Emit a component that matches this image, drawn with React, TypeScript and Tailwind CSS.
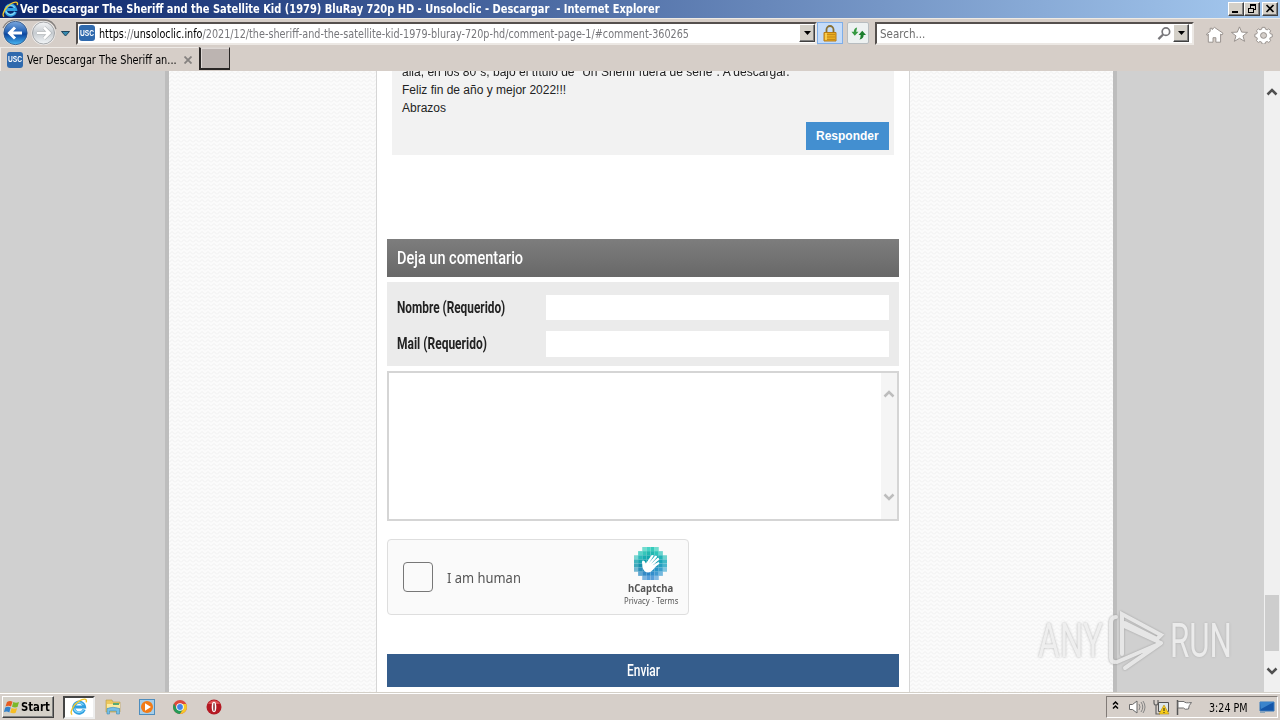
import { useLayoutEffect, useRef, useState } from "react";
import type { ReactNode } from "react";

const UI = "font-['DejaVu_Sans_Condensed','DejaVu_Sans',sans-serif]";
const RAISED = "border border-t-white border-l-white border-r-[#404040] border-b-[#404040] bg-[#d4d0c8] shadow-[inset_-1px_-1px_0_#808080]";
const SUNKEN = "border-2 border-t-[#55504e] border-l-[#55504e] border-r-[#ece8e4] border-b-[#ece8e4] bg-white";

// Squeezes or stretches a single line of text to a fixed width
function Fit({ width, className = "", children }: { width: number; className?: string; children: ReactNode }) {
    const ref = useRef<HTMLSpanElement>(null);
    const [scale, setScale] = useState(1);

    useLayoutEffect(() => {
        if (ref.current) setScale(width / ref.current.offsetWidth);
    }, [width]);

    return (
        <span className={`block shrink-0 ${className}`} style={{ width }}>
            <span ref={ref} className="inline-block origin-left whitespace-pre" style={{ transform: `scaleX(${scale})` }}>
                {children}
            </span>
        </span>
    );
}

function IeLogo({ className = "" }: { className?: string }) {
    return (
        <svg viewBox="0 0 18 18" className={className}>
            <path d="M14.2 11.5A5.4 5.4 0 1 1 14.5 9H5.5" fill="none" stroke="#2f9fe0" strokeWidth="3.2" />
            <path d="M13.8 11.8A5.4 5.4 0 0 1 4 10.5M4.6 6.8A5.4 5.4 0 0 1 13.5 7" fill="none" stroke="#86d8fa" strokeWidth="1.2" />
            <path d="M2.2 16.6C-.8 14.8 3.5 6.5 9 3.2C12.8 .8 17.5-.2 16.2 4.4" fill="none" stroke="#f0c52d" strokeWidth="1.4" />
        </svg>
    );
}

function UscIcon() {
    return (
        <span className="flex size-4 shrink-0 items-center justify-center rounded-[3px] bg-[#2f69ad] font-['Liberation_Sans',sans-serif] text-[9px] font-bold leading-none text-white">
            <Fit width={14}>USC</Fit>
        </span>
    );
}

function DropButton() {
    return (
        <span className={`flex h-[18px] w-4 shrink-0 items-center justify-center ${RAISED}`}>
            <svg viewBox="0 0 7 4" className="h-1 w-[7px]"><path d="M0 0h7L3.5 4z" fill="#000" /></svg>
        </span>
    );
}

function TitleBar() {
    return (
        <div className="flex h-[18px] items-center bg-[linear-gradient(90deg,#0a246a,#a6caf0)]">
            <IeLogo className="ml-[2px] size-[17px] shrink-0" />
            <Fit width={640} className={`ml-[1px] text-[12px] font-bold leading-[18px] text-white ${UI}`}>
                {"Ver Descargar The Sheriff and the Satellite Kid (1979) BluRay 720p HD - Unsoloclic - Descargar  - Internet Explorer"}
            </Fit>
            <div className="ml-auto mr-[2px] flex">
                <span className={`h-[14px] w-4 ${RAISED}`}>
                    <svg viewBox="0 0 14 12" className="h-3 w-[14px]"><path d="M3 8h6v2H3z" /></svg>
                </span>
                <span className={`h-[14px] w-4 ${RAISED}`}>
                    <svg viewBox="0 0 14 12" className="h-3 w-[14px]" fill="none" stroke="#000" shapeRendering="crispEdges">
                        <path d="M5.5 5V1.5h5v5H9M5 2h6M3.5 5.5h5v4h-5zM3 5h6" />
                    </svg>
                </span>
                <span className={`ml-[2px] h-[14px] w-4 ${RAISED}`}>
                    <svg viewBox="0 0 14 12" className="h-3 w-[14px]"><path d="M3.5 2l7 7M10.5 2l-7 7" stroke="#000" strokeWidth="1.7" /></svg>
                </span>
            </div>
        </div>
    );
}

function NavButtons() {
    return (
        <svg viewBox="0 0 76 30" className="h-[30px] w-[76px] shrink-0">
            <defs>
                <linearGradient id="back" x2="0" y2="1">
                    <stop stopColor="#7ba8de" /><stop offset=".45" stopColor="#2462b5" /><stop offset=".55" stopColor="#0b46a0" /><stop offset="1" stopColor="#49b8f4" />
                </linearGradient>
                <linearGradient id="fwd" x2="0" y2="1">
                    <stop stopColor="#f4f5f6" /><stop offset=".5" stopColor="#c6cbd0" /><stop offset="1" stopColor="#f3f6f8" />
                </linearGradient>
            </defs>
            <path d="M3 10Q7 2 16 2h28q9 0 12 9" fill="none" stroke="#85817f" strokeWidth="1.3" />
            <circle cx="15.5" cy="15" r="12.5" fill="#f3f2f1" />
            <circle cx="15.5" cy="15" r="11.7" fill="url(#back)" stroke="#31517c" strokeWidth=".8" />
            <path d="M22 15H10m5-5.5L9.5 15l5.5 5.5" fill="none" stroke="#fff" strokeWidth="3" />
            <circle cx="43.5" cy="15" r="12" fill="#f3f2f1" />
            <circle cx="43.5" cy="15" r="11" fill="url(#fwd)" stroke="#9b9da0" strokeWidth=".9" />
            <path d="M37 15h12m-5-5.5l5.5 5.5l-5.5 5.5" fill="none" stroke="#aeb2b5" strokeWidth="3.8" />
            <path d="M37 15h12m-5-5.5l5.5 5.5l-5.5 5.5" fill="none" stroke="#fff" strokeWidth="2.6" />
            <path d="M61.5 13.5h8l-4 4.5z" fill="#368ab0" stroke="#20465e" />
        </svg>
    );
}

function AddressRow() {
    return (
        <div className={`flex h-[29px] items-center border-t border-[#eeeae4] text-[12px] ${UI}`}>
            <NavButtons />
            <div className={`flex h-[23px] w-[741px] items-center ${SUNKEN}`}>
                <span className="ml-px"><UscIcon /></span>
                <Fit width={590} className="mt-[2px] ml-[4px] text-[#77777b]">
                    <span className="text-black">https</span>://<span className="text-black">unsoloclic.info</span>/2021/12/the-sheriff-and-the-satellite-kid-1979-bluray-720p-hd/comment-page-1/#comment-360265
                </Fit>
                <span className="ml-auto"><DropButton /></span>
            </div>
            <div className="flex h-[22px] w-[26px] items-center justify-center border border-[#7eaee9] bg-[#c5dcf9]">
                <svg viewBox="0 0 14 17" className="h-[17px] w-[14px]">
                    <path d="M3.5 8V4.5a3.5 3.5 0 0 1 7 0V8" fill="none" stroke="#887033" strokeWidth="1.8" />
                    <path d="M1 7.5h12V16H1z" fill="#e9ad22" stroke="#b77b16" />
                    <path d="M2 9.5h10M2 12h10M2 14.5h10" stroke="#c78b18" />
                    <path d="M3 8v7" stroke="#ffdb60" strokeWidth="1.5" />
                </svg>
            </div>
            <div className="ml-1 flex h-[22px] w-[22px] items-center justify-center rounded-[2px] border border-[#b8bdc0] bg-[#edf1f1]">
                <svg viewBox="0 0 18 16" className="h-[15px] w-[17px]">
                    <path d="M7.5 1.5L6.5 6H9L5 10.5L1.5 6H4Q4 2.5 7.5 1.500z" fill="#369941" />
                    <path d="M13 5l4 4.500H14.500q0 4-4.500 5q1.300-2 1.300-5H9z" fill="#1c7e2d" />
                </svg>
            </div>
            <div className={`ml-[6px] flex h-[23px] w-[319px] items-center ${SUNKEN}`}>
                <Fit width={45} className="mt-[2px] ml-[3px] text-[#6d6d6d]">Search...</Fit>
                <svg viewBox="0 0 16 16" className="ml-auto mr-[1px] size-[15px]" fill="none" stroke="#77767a">
                    <circle cx="9.5" cy="6" r="4" strokeWidth="1.8" />
                    <path d="M6.5 9L1.5 14" strokeWidth="2.4" />
                </svg>
                <span className="mr-[3px]"><DropButton /></span>
            </div>
            <svg viewBox="0 0 72 20" className="ml-[11px] mt-[4px] h-[18px] w-[68px]" preserveAspectRatio="none" fill="#fff" stroke="#928c88" strokeWidth="1">
                <path d="M3.5 9v9h5v-5h3v5h5V9l1.500 1l1-2L10 1.500L7.500 4V2.500h-2V6L1.500 9l1 1.500z" />
                <path d="M36.500 1l2.300 5.800l6.200.3l-4.800 3.900l1.700 6l-5.400-3.400l-5.400 3.400l1.700-6L28 7.100l6.200-.3z" />
                <path d="M60.500 1.500h3l.5 2l1.800.8l1.700-1.100l2.100 2.100l-1.100 1.800l.7 1.600l2 .5v3l-2 .5l-.7 1.700l1.100 1.800l-2.100 2.100l-1.700-1.100l-1.800.8l-.5 2h-3l-.5-2l-1.800-.8l-1.700 1.100l-2.100-2.100l1.100-1.800l-.7-1.700l-2-.5v-3l2-.5l.7-1.600l-1.100-1.800l2.100-2.100l1.700 1.100l1.800-.8z" />
                <circle cx="62" cy="10.500" r="3.200" fill="#d4cec9" />
            </svg>
        </div>
    );
}

function TabRow() {
    return (
        <div className={`flex h-6 items-start text-[12px] ${UI}`}>
            <div className="flex h-6 w-[198px] items-center border-l border-t border-[#efebe7] pl-[6px]">
                <UscIcon />
                <Fit width={150} className="mt-px ml-1 text-black">Ver Descargar The Sheriff an...</Fit>
                <svg viewBox="0 0 8 8" className="ml-[7px] size-2"><path d="M.5 .5l7 7M7.5 .5l-7 7" stroke="#858280" strokeWidth="1.8" /></svg>
            </div>
            <span className="ml-px h-[23px] w-[31px] border-b-2 border-l-2 border-r border-t border-b-[#292625] border-l-[#292625] border-r-[#292625] border-t-[#d9d3ce] bg-[#bcb4b1] shadow-[inset_1px_1px_0_#ded8d5]" />
        </div>
    );
}

function Chevron({ down = false, color = "#505050" }: { down?: boolean; color?: string }) {
    return (
        <svg viewBox="0 0 12 8" className={`h-2 w-3 ${down ? "rotate-180" : ""}`}>
            <path d="M1.500 6.500L6 2l4.500 4.500" fill="none" stroke={color} strokeWidth="2.500" />
        </svg>
    );
}

function Texture({ className = "" }: { className?: string }) {
    return (
        <svg className={`h-full ${className}`}>
            <defs>
                <pattern id="weave" width="6" height="4" patternUnits="userSpaceOnUse">
                    <rect width="6" height="4" fill="#fbfbfb" />
                    <path d="M0 3.500L3 .5L6 3.500" fill="none" stroke="#ededed" strokeWidth=".9" />
                </pattern>
            </defs>
            <rect width="100%" height="100%" fill="url(#weave)" />
        </svg>
    );
}

function CommentForm() {
    return (
        <form className="mt-[84px] ml-[10px] w-[512px]">
            <div className="flex h-[38px] items-center bg-[linear-gradient(#7d7d7d,#686868)] pt-px pl-[10px] font-['Roboto',sans-serif] text-[19px] font-medium text-white">
                <Fit width={126}>Deja un comentario</Fit>
            </div>
            <div className="mt-[5px] flex h-[84px] flex-col gap-[11px] bg-[#ebebeb] pt-[13px] pl-[10px] font-['Roboto',sans-serif] text-[16px] font-bold text-[#222]">
                <div className="flex h-[25px] items-center">
                    <Fit width={108}>Nombre (Requerido)</Fit>
                    <span className="ml-[41px] h-[25px] w-[343px] bg-white" />
                </div>
                <div className="flex h-[26px] items-center">
                    <Fit width={90}>Mail (Requerido)</Fit>
                    <span className="ml-[59px] h-[26px] w-[343px] bg-white" />
                </div>
            </div>
            <div className="mt-[5px] flex h-[150px] justify-end border-2 border-[#d5d5d5] bg-white">
                <div className="flex w-4 flex-col items-center justify-between bg-[#f5f5f5] pt-[17px] pb-[18px]">
                    <Chevron color="#bdbdbd" />
                    <Chevron down color="#bdbdbd" />
                </div>
            </div>
            <Captcha />
            <div className="mt-[39px] flex h-[33px] items-center justify-center bg-[#355d8c] pt-px font-['Roboto',sans-serif] text-[17px] font-medium text-white">
                <Fit width={33}>Enviar</Fit>
            </div>
        </form>
    );
}

// Row by row: start column and colours of the stepped circle behind the hand
const LOGO_ROWS = [
    { start: 2, cells: ["#71dccf", "#47d3c5", "#35cbbb", "#71dccf"] },
    { start: 1, cells: ["#57d3c9", "#35c6bb", "#21b9b0", "#20b7b1", "#2bc4b9", "#69d5cf"] },
    { start: 0, cells: ["#7bd6d2", "#2bbabb", "#18aeb1", "#14a8ae", "#15a9b1", "#12a8b0", "#21b3b8", "#70d3cf"] },
    { start: 0, cells: ["#40b4bd", "#17a3ae", "#0d9eaa", "#0b9ba9", "#0f9bad", "#139db1", "#19a5b8", "#42bac6"] },
    { start: 0, cells: ["#3ea9bc", "#168fab", "#148fab", "#138dad", "#188fb2", "#1d96b9", "#249ec0", "#49b5cd"] },
    { start: 0, cells: ["#75b8d2", "#288fb9", "#1c83b4", "#1c85b8", "#248cc0", "#2994c7", "#399fce", "#80c5df"] },
    { start: 1, cells: ["#60a7d1", "#348bc6", "#2c85c6", "#328dcc", "#419ad1", "#74b8de"] },
    { start: 2, cells: ["#7bb4df", "#569fda", "#599fd9", "#83bae3"] },
];

function Captcha() {
    return (
        <div className="mt-[18px] flex h-[76px] w-[302px] items-center rounded-[4px] border border-[#dedede] bg-[#fafafa] pl-[15px] font-['Noto_Sans',sans-serif] text-[#555]">
            <span className="size-[30px] rounded-[4px] border border-[#777] bg-[#fafafa]" />
            <Fit width={74} className="ml-[14px] text-[14px]">I am human</Fit>
            <div className="ml-auto mr-[10px] flex h-full w-[54px] flex-col items-center pt-[7px]">
                <svg viewBox="0 0 32 32" className="mr-px size-[33px]">
                    {LOGO_ROWS.map((row, y) =>
                        row.cells.map((color, x) => (
                            <rect key={`${x}-${y}`} x={(row.start + x) * 4} y={y * 4} width="4" height="4" fill={color} />
                        ))
                    )}
                    <path
                        d="M8 16.500Q7 13.500 9 13Q10.500 13 11.500 16L17 8Q18.500 7.300 19.200 8.500L14.500 15.500L20.500 8.500Q22 8 22.500 9.500L16.500 16.500L23 10.500Q24.500 10.500 24.500 12L18 18L23.500 14.500Q25 15 24.500 16.200Q20 19.500 18.500 22Q15 26 11 24Q8 22 8 16.500z"
                        fill="#fff"
                    />
                </svg>
                <Fit width={45} className="mt-[2px] mr-px text-[10px] font-bold leading-[13px]">hCaptcha</Fit>
                <Fit width={54} className="text-[8px] leading-[12px]">Privacy - Terms</Fit>
            </div>
        </div>
    );
}

function Page() {
    return (
        <div className="relative flex h-[621px] overflow-hidden bg-[#d0d0d0]">
            <div className="w-[165px]" />
            <div className="w-1 bg-[#bdbdbd]" />
            <Texture className="w-[207px]" />
            <main className="h-full w-[534px] shrink-0 border-l border-r border-[#d6d6d6] bg-white">
                <div className="ml-[15px] flex h-[84px] w-[502px] flex-col bg-[#f2f2f2] pl-[10px] font-['Liberation_Sans',sans-serif] text-[12px] leading-[18px] text-[#222]">
                    <div className="-mt-[8px]">
                        <Fit width={388} className="h-[18px]">allá, en los 80´s, bajo el título de "Un Sheriff fuera de serie". A descargar.</Fit>
                        <Fit width={164} className="h-[18px]">Feliz fin de año y mejor 2022!!!</Fit>
                        <Fit width={44} className="h-[18px]">Abrazos</Fit>
                    </div>
                    <span className="mt-[5px] mr-[5px] flex h-7 w-[83px] items-center justify-center self-end bg-[#438fd0] font-bold text-white">
                        <Fit width={63}>Responder</Fit>
                    </span>
                </div>
                <CommentForm />
            </main>
            <Texture className="w-[203px]" />
            <div className="w-1 bg-[#bdbdbd]" />
            <div className="ml-auto flex w-4 flex-col items-center bg-[#f0f0f0]">
                <span className="mt-[17px] h-2"><Chevron /></span>
                <span className="mt-[499px] h-14 w-[14px] bg-[#cdcdcd]" />
                <span className="mt-[16px]"><Chevron down /></span>
            </div>
            <Watermark />
        </div>
    );
}

function Watermark() {
    return (
        <div className="absolute top-[538px] left-[1038px] flex h-16 items-center font-['Roboto',sans-serif] text-[48px] font-normal leading-none text-[#eeeeee] opacity-90 [text-shadow:0_0_3px_#aaa]">
            <Fit width={65}>ANY</Fit>
            <svg viewBox="0 0 60 64" className="ml-[5px] h-16 w-[60px] drop-shadow-[0_0_1px_#999]" fill="none" stroke="#e9e9e9" strokeWidth="4" strokeLinecap="round">
                <path d="M8 8Q3 8 3 14v35q0 4 4 4" />
                <path d="M14 45V5L53 26L49 30L17 14M53 34L9 53M53 34L17 59M16 17L53 34" />
            </svg>
            <Fit width={62} className="ml-[2px]">RUN</Fit>
        </div>
    );
}

function Taskbar() {
    return (
        <div className={`flex h-7 items-center border-t border-[#d4d0c8] bg-[#d6cfc9] pt-px shadow-[inset_0_1px_0_#fff] ${UI}`}>
            <div className={`ml-[2px] flex h-[22px] w-[52px] items-center ${RAISED}`}>
                <svg viewBox="0 0 16 16" className="ml-[1px] size-4">
                    <path d="M3 3q3-2 5.500-.3L7 7.500Q4.500 6 1.500 7.500z" fill="#e75b20" />
                    <path d="M9.300 3Q12 4.500 15 3l-1.500 5Q11 9 8 7.800z" fill="#7bb829" />
                    <path d="M1.200 8.500q3-1.300 5.500.1l-1.400 4.800Q3 12-.1 13z" fill="#3482ca" />
                    <path d="M7.600 9q2.500 1.200 5.500.2l-1.400 4.500q-2.700 1.200-5.500-.1z" fill="#f6bd24" />
                </svg>
                <Fit width={29} className="ml-[1px] text-[12px] font-bold text-black">Start</Fit>
            </div>
            <div className="ml-[9px] flex h-[23px] w-8 items-center justify-center border-2 border-t-[#444] border-l-[#444] border-r-[#eee] border-b-[#eee] bg-white">
                <IeLogo className="size-[18px]" />
            </div>
            <svg viewBox="0 0 18 18" className="ml-[9px] size-[18px]">
                <path d="M2 2h6l1 2h7v10H2z" fill="#edc85d" stroke="#b99a43" strokeWidth=".6" />
                <path d="M3 6h13v4H3z" fill="#fbeaa0" /><path d="M9 5h6v2H9z" fill="#58aa74" />
                <path d="M3 10.500Q9 8 15.500 10.500V16h-3v-3h-7v3H3z" fill="#76bfe6" stroke="#428fbb" strokeWidth=".6" />
            </svg>
            <svg viewBox="0 0 18 18" className="ml-[16px] size-[18px]">
                <rect x="1.500" y="1.500" width="15" height="15" fill="#a6cee9" stroke="#4e8dbd" />
                <circle cx="9" cy="9" r="6" fill="#f27b16" /><path d="M7 5.200v7.600L13 9z" fill="#fff" />
            </svg>
            <svg viewBox="0 0 16 16" className="ml-[16px] size-4">
                <circle cx="8" cy="8" r="7" fill="#dd493b" />
                <path d="M2 4.500A7 7 0 0 0 8 15l3.200-5.300L4.800 9.800z" fill="#249b57" />
                <path d="M8 15a7 7 0 0 0 6.200-10H8l3.300 5z" fill="#f6c928" />
                <circle cx="8" cy="8" r="3.800" fill="#fff" /><circle cx="8" cy="8" r="2.900" fill="#4285e8" />
            </svg>
            <svg viewBox="0 0 16 16" className="ml-[18px] size-4">
                <circle cx="8" cy="8" r="7.500" fill="#b41923" /><path d="M2 5a7 7 0 0 1 12 0z" fill="#dd5355" />
                <ellipse cx="8" cy="8" rx="2.300" ry="5.200" fill="#fff" /><ellipse cx="8" cy="8" rx=".7" ry="4.300" fill="#751117" />
            </svg>
            <div className="ml-auto mr-[2px] flex h-[22px] w-[172px] items-center border border-t-[#817b77] border-l-[#817b77] border-r-white border-b-white">
                <svg viewBox="0 0 82 18" className="ml-[3px] h-[18px] w-[82px]" fill="none">
                    <path d="M3 6.500L5.500 4L8 6.500M3 10.500L5.500 8L8 10.500" stroke="#000" strokeWidth="1.500" />
                    <path d="M19.500 6.500h3L27 3v12l-4.500-3.500h-3z" fill="#fff" stroke="#696969" />
                    <path d="M29 6q2 3 0 6M31 4q3.500 5 0 10M33 3q4 6 0 12" stroke="#858585" />
                    <path d="M44 2v3q0 2 2 2t2-2V2M46 7v9h4" stroke="#666" strokeWidth="1.200" />
                    <path d="M48.500 4.500h10v9h-10z" fill="#dce5e8" stroke="#515151" />
                    <path d="M54 7l5 9H49z" fill="#f8cd17" stroke="#b48a10" strokeWidth=".6" /><path d="M54 10v3M54 14v1" stroke="#222" />
                    <path d="M67.500 2v15" stroke="#555" strokeWidth="1.500" />
                    <path d="M68 3.500h6q1 2 7.500 1q-3 3-3 6.500q-4 1-5-1H68z" fill="#fff" stroke="#707070" />
                </svg>
                <Fit width={39} className="ml-[17px] mt-px text-[12px] text-black">3:24 PM</Fit>
                <svg viewBox="0 0 16 14" className="ml-auto mr-[2px] h-[14px] w-4">
                    <path d="M1 2h14v9H1z" fill="#1556a9" stroke="#3778ba" /><path d="M1 2h14L2 9z" fill="#3b84cc" /><path d="M1 12.500h5" stroke="#8ca5b8" />
                </svg>
            </div>
        </div>
    );
}

export default function App() {
    return (
        <div className="flex h-[720px] w-[1280px] flex-col overflow-hidden bg-[#d6cec8]">
            <TitleBar />
            <AddressRow />
            <TabRow />
            <Page />
            <Taskbar />
        </div>
    );
}
